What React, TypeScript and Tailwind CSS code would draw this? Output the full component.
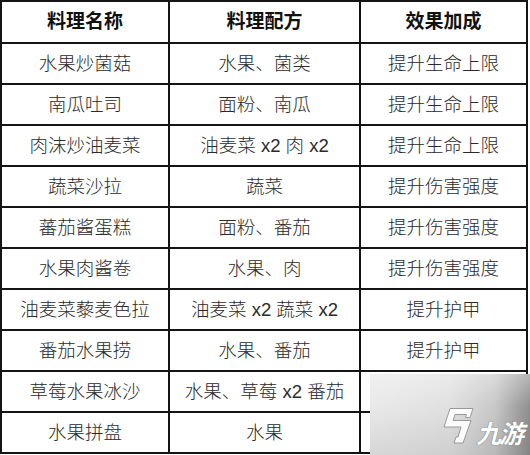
import React from "react";

const rows: [string, string, string][] = [
  ["水果炒菌菇", "水果、菌类", "提升生命上限"],
  ["南瓜吐司", "面粉、南瓜", "提升生命上限"],
  ["肉沫炒油麦菜", "油麦菜 x2 肉 x2", "提升生命上限"],
  ["蔬菜沙拉", "蔬菜", "提升伤害强度"],
  ["蕃茄酱蛋糕", "面粉、番茄", "提升伤害强度"],
  ["水果肉酱卷", "水果、肉", "提升伤害强度"],
  ["油麦菜藜麦色拉", "油麦菜 x2 蔬菜 x2", "提升护甲"],
  ["番茄水果捞", "水果、番茄", "提升护甲"],
  ["草莓水果冰沙", "水果、草莓 x2 番茄", ""],
  ["水果拼盘", "水果", ""],
];

const font = {
  fontFamily: '"Liberation Sans", "Noto Sans CJK SC", sans-serif',
};

function Cell({ w, children, bold }: { w: string; children: React.ReactNode; bold?: boolean }) {
  return (
    <div
      className={`${w} shrink-0 h-full flex items-center justify-center border-r-2 border-[#141414] ${
        bold ? "font-bold text-[#111] text-[19px]" : "font-light text-[#2a2a2a] text-[18.5px]"
      }`}
    >
      {children}
    </div>
  );
}

export default function App() {
  return (
    <div className="relative w-[530px] h-[455px] bg-white overflow-hidden" style={font}>
      <div className="w-[528px] border-l-2 border-t-2 border-[#141414] flex flex-col">
        <div className="h-[42px] flex border-b-2 border-[#141414]">
          <Cell w="w-[168px]" bold>料理名称</Cell>
          <Cell w="w-[191px]" bold>料理配方</Cell>
          <Cell w="w-[167px]" bold>效果加成</Cell>
        </div>
        {rows.map((r, i) => (
          <div key={i} className="h-[41px] flex border-b-2 border-[#141414]">
            <Cell w="w-[168px]">{r[0]}</Cell>
            <Cell w="w-[191px]">{r[1]}</Cell>
            <Cell w="w-[167px]">{r[2]}</Cell>
          </div>
        ))}
      </div>

      <div className="absolute left-[370px] top-[374px] w-[160px] h-[81px] bg-[linear-gradient(90deg,#e9e9e9_0%,#e0e0e0_50%,#c8c8c8_78%,#8f8f8f_100%)]">
        <div className="absolute inset-0 bg-[linear-gradient(180deg,rgba(255,255,255,0.35)_0%,rgba(255,255,255,0)_40%,rgba(0,0,0,0.08)_100%)]" />
        <svg className="absolute left-[72px] top-[34px]" width="32" height="36" viewBox="0 0 32 36">
          <path
            d="M8 0.5 L31 0.5 L28 9.5 L23.5 9.5 L24.5 6.5 L13 6.5 L11 12.5 L29 12.5 L21 35 L12 35 L14 29 L16 29 L19 19 L2 19 Z"
            fill="#fbfbfb"
            stroke="#9a9a9a"
            strokeWidth="1"
            strokeLinejoin="round"
          />
        </svg>
        <div
          className="absolute left-[106px] top-[46px] text-[25px] leading-none font-bold italic text-white tracking-[-2px]"
          style={{ fontFamily: '"Noto Sans CJK SC", sans-serif', textShadow: "0 0 1px #777, 0 0 1px #777" }}
        >
          九游
        </div>
      </div>
    </div>
  );
}
